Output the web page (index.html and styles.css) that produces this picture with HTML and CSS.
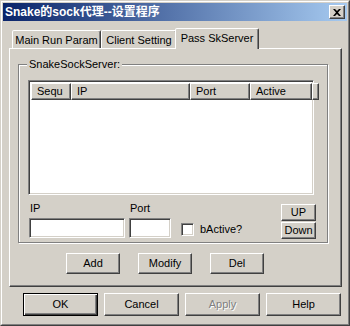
FILE: index.html
```html
<!DOCTYPE html>
<html>
<head>
<meta charset="utf-8">
<link rel="stylesheet" href="styles.css">
</head>
<body>
<div class="window">
  <div class="frame">
    <div class="titlebar">
      <span class="title">Snake的sock代理--设置程序</span>
      <div class="closebtn">
        <svg width="8" height="7" viewBox="0 0 8 7"><path d="M0 0h2l2 2 2-2h2L5 3.5 8 7H6L4 5 2 7H0l3-3.5z" fill="#000"/></svg>
      </div>
    </div>
    <div class="content">
      <div class="tabs">
        <div class="tab t1">Main Run Param</div>
        <div class="tab t2">Client Setting</div>
        <div class="tab t3 active">Pass SkServer</div>
      </div>
      <div class="panel">
        <div class="group">
          <span class="legend">SnakeSockServer:</span>
          <div class="listview">
            <div class="lvheader">
              <div class="col c1">Sequ</div>
              <div class="col c2">IP</div>
              <div class="col c3">Port</div>
              <div class="col c4">Active</div>
              <div class="col c5"></div>
            </div>
          </div>
          <div class="editrow">
            <div class="field f-ip">
              <span class="label">IP</span>
              <div class="input w-ip"></div>
            </div>
            <div class="field f-port">
              <span class="label">Port</span>
              <div class="input w-port"></div>
            </div>
            <div class="check"><span class="box"></span><span>bActive?</span></div>
            <div class="updown">
              <div class="btn small">UP</div>
              <div class="btn small">Down</div>
            </div>
          </div>
        </div>
        <div class="actions">
          <div class="btn act">Add</div>
          <div class="btn act">Modify</div>
          <div class="btn act">Del</div>
        </div>
      </div>
      <div class="footer">
        <div class="btn big default">OK</div>
        <div class="btn big">Cancel</div>
        <div class="btn big disabled">Apply</div>
        <div class="btn big">Help</div>
      </div>
    </div>
  </div>
</div>
</body>
</html>
```

FILE: styles.css
```css
* { box-sizing: border-box; }
html, body { margin: 0; padding: 0; }
body {
  width: 350px;
  height: 326px;
  background: #d4d0c8;
  font-family: "Liberation Sans", Arial, "Noto Sans CJK SC", sans-serif;
  font-size: 11px;
  line-height: 13px;
  color: #000;
}
.window {
  width: 350px;
  height: 326px;
  border: 1px solid;
  border-color: #d4d0c8 #404040 #404040 #d4d0c8;
}
.frame {
  height: 100%;
  border: 1px solid;
  border-color: #fff #808080 #808080 #fff;
  padding: 1px;
  display: flex;
  flex-direction: column;
}
.titlebar {
  height: 18px;
  flex: none;
  background: linear-gradient(to right, #0a246a, #a6caf0);
  display: flex;
  align-items: flex-start;
  justify-content: space-between;
  padding-left: 2px;
  padding-right: 2px;
}
.title {
  color: #fff;
  font-weight: bold;
  font-size: 12px;
  line-height: 18px;
  font-family: "Liberation Sans", Arial, "Noto Sans CJK SC", sans-serif;
  white-space: nowrap;
}
.closebtn {
  margin-top: 2px;
  width: 16px;
  height: 14px;
  background: #d4d0c8;
  border: 1px solid;
  border-color: #fff #404040 #404040 #fff;
  box-shadow: inset -1px -1px #808080;
  display: flex;
  align-items: center;
  justify-content: center;
  padding-right: 1px;
}
.closebtn svg { display: block; }
.content {
  flex: 1;
  padding: 0 5px 0 6px;
  display: flex;
  flex-direction: column;
}
.tabs {
  display: flex;
  align-items: flex-end;
  height: 20px;
  margin-top: 7px;
  padding-left: 3px;
  flex: none;
}
.tab {
  height: 18px;
  border: 1px solid;
  border-bottom: none;
  border-color: #fff #404040 transparent #fff;
  box-shadow: inset -1px 0 #808080;
  border-radius: 2px 2px 0 0;
  background: #d4d0c8;
  text-align: center;
  line-height: 16px;
  padding-top: 1px;
  white-space: nowrap;
}
.t1 { width: 89px; }
.t2 { width: 76px; }
.t3 { width: 80px; }
.tab.active {
  width: 84px;
  height: 21px;
  margin: 0 -2px -1px -2px;
  line-height: 17px;
  position: relative;
  z-index: 2;
}
.panel {
  height: 239px;
  flex: none;
  border: 1px solid;
  border-color: #fff #404040 #404040 #fff;
  box-shadow: inset -1px -1px #808080;
  padding: 15px 13px 0 8px;
  display: flex;
  flex-direction: column;
}
.group {
  position: relative;
  height: 179px;
  flex: none;
  border: 1px solid #808080;
  box-shadow: inset 1px 1px #fff, 1px 1px #fff;
  padding: 15px 0 0 9px;
}
.legend {
  position: absolute;
  top: -7px;
  left: 8px;
  padding: 0 2px;
  background: #d4d0c8;
  line-height: 13px;
}
.listview {
  width: 286px;
  height: 115px;
  border: 1px solid;
  border-color: #808080 #fff #fff #808080;
  box-shadow: inset 1px 1px #404040, inset -1px -1px #d4d0c8;
  background: #fff;
  padding: 2px 2px 0 2px;
}
.lvheader {
  display: flex;
  height: 17px;
}
.col {
  height: 17px;
  border: 1px solid;
  border-color: #fff #404040 #404040 #fff;
  box-shadow: inset -1px -1px #808080;
  background: #d4d0c8;
  padding-left: 5px;
  line-height: 14px;
  flex: none;
}
.c1 { width: 40px; }
.c2 { width: 119px; }
.c3 { width: 60px; }
.c4 { width: 62px; }
.c5 { flex: 1; }
.editrow {
  display: flex;
  align-items: flex-end;
  margin-top: 7px;
  height: 36px;
}
.field {
  display: flex;
  flex-direction: column;
}
.label {
  padding-left: 1px;
  height: 16px;
  line-height: 13px;
}
.f-ip { margin-left: 1px; }
.f-port { margin-left: 4px; }
.input {
  height: 20px;
  border: 1px solid;
  border-color: #808080 #fff #fff #808080;
  box-shadow: inset 1px 1px #404040, inset -1px -1px #d4d0c8;
  background: #fff;
}
.w-ip { width: 96px; }
.w-port { width: 42px; }
.check {
  display: flex;
  align-items: center;
  margin-left: 10px;
  margin-bottom: 2px;
  gap: 6px;
}
.box {
  width: 13px;
  height: 13px;
  border: 1px solid;
  border-color: #808080 #fff #fff #808080;
  box-shadow: inset 1px 1px #404040, inset -1px -1px #d4d0c8;
  background: #fff;
}
.updown {
  margin-left: auto;
  margin-right: 11px;
  display: flex;
  flex-direction: column;
  gap: 1px;
  margin-bottom: -1px;
}
.btn {
  background: #d4d0c8;
  border: 1px solid;
  border-color: #fff #404040 #404040 #fff;
  box-shadow: inset -1px -1px #808080;
  display: flex;
  align-items: center;
  justify-content: center;
  white-space: nowrap;
}
.small {
  width: 35px;
  height: 17px;
}
.actions {
  display: flex;
  margin-top: 10px;
  padding-left: 48px;
  gap: 18px;
}
.act {
  width: 54px;
  height: 21px;
}
.footer {
  display: flex;
  gap: 6px;
  margin-top: 6px;
  padding-left: 14px;
}
.big {
  width: 75px;
  height: 23px;
}
.default {
  border-color: #000;
  box-shadow: inset 1px 1px #fff, inset -1px -1px #404040, inset -2px -2px #808080;
}
.disabled {
  color: #808080;
  text-shadow: 1px 1px 0 #fff;
}
```
